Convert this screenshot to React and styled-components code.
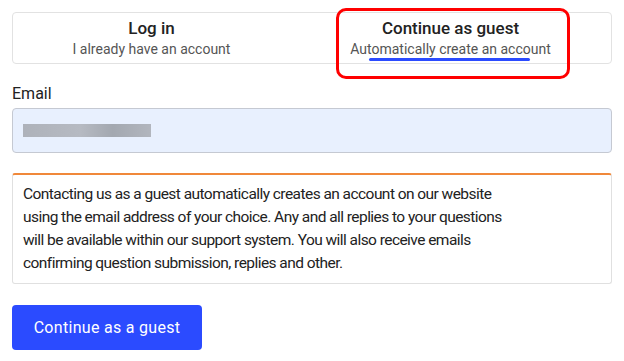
import React from 'react';
import styled, { createGlobalStyle } from 'styled-components';

const GlobalStyle = createGlobalStyle`
  body {
    margin: 0;
    background: #fff;
    font-family: 'Roboto', 'Liberation Sans', sans-serif;
    color: #222;
  }
`;

const Page = styled.div`
  width: 624px;
  padding: 12px;
  box-sizing: border-box;
  position: relative;
`;

const Tabs = styled.div`
  display: grid;
  grid-template-columns: 1fr 1fr;
  height: 52px;
  border: 1px solid #e2e2e2;
  border-radius: 4px;
  box-sizing: border-box;
`;

const Tab = styled.div`
  position: relative;
  display: flex;
  flex-direction: column;
  align-items: center;
  padding: 5px 22px 0 0;
`;

const TabTitle = styled.div`
  font-size: 17px;
  font-weight: 500;
  color: #222;
  line-height: 21px;
`;

const TabSub = styled.div`
  font-size: 14px;
  color: #555;
  line-height: 18px;
  margin-top: 1px;
`;

const Underline = styled.div`
  position: absolute;
  left: 57px;
  width: 161px;
  bottom: 2px;
  height: 3px;
  background: #2b4bff;
  border-radius: 2px;
`;

const Highlight = styled.div`
  position: absolute;
  left: 336px;
  top: 8px;
  width: 234px;
  height: 71px;
  border: 3px solid #f00;
  border-radius: 10px;
  box-sizing: border-box;
  pointer-events: none;
`;

const Label = styled.div`
  font-size: 16px;
  margin-top: 20px;
  line-height: 20px;
`;

const Input = styled.div`
  margin-top: 4px;
  height: 45px;
  box-sizing: border-box;
  background: #e8f0fe;
  border: 1px solid #c5c9d2;
  border-radius: 4px;
  display: flex;
  align-items: center;
  padding-left: 10px;
`;

const Blurred = styled.div`
  width: 128px;
  height: 13px;
  background: linear-gradient(90deg, #aeb2ba, #b6bac2 45%, #a3a8b0 70%, #b2b6be);
  filter: blur(0.6px);
`;

const Notice = styled.div`
  margin-top: 20px;
  border: 1px solid #e0e0e0;
  border-top: 2px solid #f0883a;
  border-radius: 3px;
  padding: 8px 10px 8px 10px;
`;

const NoticeText = styled.p`
  margin: 0;
  max-width: 502px;
  font-size: 15.5px;
  letter-spacing: -0.55px;
  line-height: 23px;
  color: #222;
`;

const Button = styled.button`
  margin-top: 21px;
  width: 190px;
  height: 45px;
  border: none;
  border-radius: 4px;
  background: #2b4bff;
  color: #fff;
  font-family: inherit;
  font-size: 16px;
  letter-spacing: 0.3px;
  cursor: pointer;
`;

export default function App() {
  return (
    <Page>
      <GlobalStyle />
      <Tabs>
        <Tab>
          <TabTitle>Log in</TabTitle>
          <TabSub>I already have an account</TabSub>
        </Tab>
        <Tab>
          <TabTitle>Continue as guest</TabTitle>
          <TabSub>Automatically create an account</TabSub>
          <Underline />
        </Tab>
      </Tabs>
      <Highlight />
      <Label>Email</Label>
      <Input>
        <Blurred />
      </Input>
      <Notice>
        <NoticeText>
          Contacting us as a guest automatically creates an account on our website
          using the email address of your choice. Any and all replies to your questions
          will be available within our support system. You will also receive emails
          confirming question submission, replies and other.
        </NoticeText>
      </Notice>
      <Button>Continue as a guest</Button>
    </Page>
  );
}
